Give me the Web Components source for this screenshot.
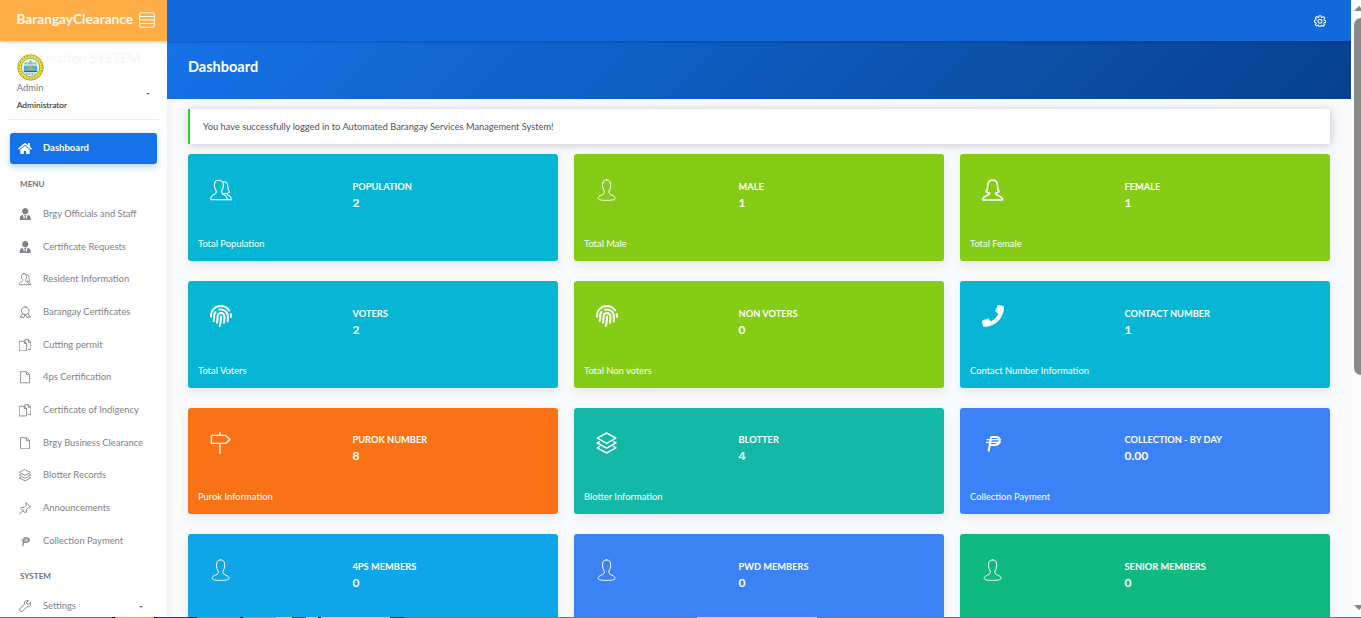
<!DOCTYPE html>
<html lang="en"><head><meta charset="utf-8"><title>Dashboard</title>
<style>
html,body{margin:0;height:618px;overflow:hidden}
body{font-family:Lato,"Open Sans",sans-serif;font-size:9.38px;color:#575962;background:#f9fbfd}
</style></head><body><brgy-app></brgy-app>
<script>
const define=(n,html,after)=>{const t=document.createElement('template');t.innerHTML=html;
 customElements.define(n,class extends HTMLElement{connectedCallback(){if(this.shadowRoot)return;this.attachShadow({mode:'open'}).append(t.content.cloneNode(true));after&&after(this,this.shadowRoot)}})};
const S=(d,w=1)=>`<path d="${d}" fill="none" stroke="currentColor" stroke-width="${w}" stroke-linejoin="round" stroke-linecap="round"/>`;
const F=d=>`<path d="${d}" fill="currentColor"/>`;
const person='M10.6 .8C7.6 .8 6.5 3 6.5 6c0 3 .9 4.6 1.7 6 .6 2-.4 3-2.4 4C3.1 17 2.2 17.8 2.2 19.6c0 1.2 3.5 1.8 8.4 1.8s8.4-.6 8.4-1.8c0-1.8-.9-2.6-3.6-3.6-2-1-3-2-2.4-4 .8-1.4 1.7-3 1.7-6C14.7 3 13.6 .8 10.6 .8z';
const group='M8.5 1.2C5.5 1.2 4.4 3.4 4.4 6.2c0 2.6.6 4 1.8 5.4.4 2.4-.2 3.2-2.2 4C1.4 16.8.7 17.6.7 20.6h16.6c0-2.6-.8-3.6-3.6-4.8-1.8-.8-2.4-1.6-2-4.2 1.2-1.4 1.7-2.8 1.7-5.4 0-2.8-1.3-5-4.9-5zM12.4 3c3.8-1 5.4 1.2 5.4 5 0 2.4.6 3.8 1.8 4.8-.6.8-1.6 1.2-2.6 1.4 0 1.4.4 1.8 1.8 2.4 1.8.8 2.4 1.6 2.4 4h-3.8M13.8 14.6h3';
const ICONS={
 home:['0 0 576 512',F('M280.37 148.26L96 300.11V464a16 16 0 0 0 16 16l112.06-.29a16 16 0 0 0 15.92-16V368a16 16 0 0 1 16-16h64a16 16 0 0 1 16 16v95.64a16 16 0 0 0 16 16.05L464 480a16 16 0 0 0 16-16V300L295.67 148.26a12.19 12.19 0 0 0-15.3 0zM571.6 251.47L488 182.56V44.05a12 12 0 0 0-12-12h-56a12 12 0 0 0-12 12v72.61L318.47 43a48 48 0 0 0-61 0L4.34 251.47a12 12 0 0 0-1.6 16.9l25.5 31A12 12 0 0 0 45.15 301l235.22-193.74a12.19 12.19 0 0 1 15.3 0L530.9 301a12 12 0 0 0 16.9-1.6l25.5-31a12 12 0 0 0-1.7-16.93z')],
 tie:['0 0 448 512',F('M224 256c70.7 0 128-57.3 128-128S294.7 0 224 0 96 57.3 96 128s57.3 128 128 128zm95.8 32.6L272 480l-32-136 32-56h-96l32 56-32 136-47.8-191.4C56.9 292 0 350.3 0 422.4V464c0 26.5 21.5 48 48 48h352c26.5 0 48-21.5 48-48v-41.6c0-72.1-56.9-130.4-128.2-133.8z')],
 phone:['0 0 512 512',F('M493.4 24.6l-104-24c-11.3-2.6-22.9 3.3-27.5 13.9l-48 112c-4.2 9.8-1.4 21.3 6.9 28l60.6 49.6c-36 76.7-98.9 140.5-177.2 177.2l-49.6-60.6c-6.8-8.3-18.2-11.1-28-6.9l-112 48C3.9 366.5-2 378.1.6 389.4l24 104C27.1 504.2 36.7 512 48 512c256.1 0 464-207.5 464-464 0-11.2-7.7-20.9-18.6-23.4z')],
 person:['0 0 22 22',S(person,1)],
 female:['0 0 22 22',S('M10.6 1C6.8 1 5.6 4 5.6 8c0 2-.6 3.6-1.4 4.6.8.8 2.2 1.2 3.4 1.4 0 1.4-.6 1.8-2.6 2.6C2.1 17.8.8 18.4.8 21h19.8c0-2.6-1.5-3.2-4.4-4.4-2-.8-2.6-1.2-2.6-2.6 1.2-.2 2.6-.6 3.4-1.4C16.2 11.6 15.6 10 15.6 8c0-4-1.2-7-5-7z',1.6)],
 group:['0 0 22 22',S(group,1.1)],
 groupSmall:['0 0 22 22',S(group,1.5)],
 finger:['0 0 512 512',F('M256.12 245.96c-13.25 0-24 10.74-24 24 1.14 72.25-8.14 141.9-27.7 211.55-2.73 9.72 2.15 30.49 23.12 30.49 10.48 0 20.11-6.92 23.09-17.52 13.53-47.91 31.04-125.41 29.48-224.52.01-13.25-10.73-24-23.99-24zm-.86-81.73C194 164.16 151.25 211.3 152.1 265.32c.75 47.94-3.75 95.91-13.37 142.55-2.69 12.98 5.67 25.69 18.64 28.36 13.05 2.67 25.67-5.66 28.36-18.64 10.34-50.09 15.17-101.58 14.37-153.02-.41-25.95 19.92-52.49 54.45-52.34 31.31.47 57.15 25.34 57.62 55.47.77 48.05-2.81 96.33-10.61 143.55-2.17 13.06 6.69 25.42 19.76 27.58 19.97 3.33 26.81-15.1 27.58-19.77 8.28-50.03 12.06-101.21 11.27-152.11-.88-55.8-47.94-101.88-104.91-102.72zm-110.69-19.78c-10.3-8.34-25.37-6.8-33.76 3.48-25.62 31.5-39.39 71.28-38.75 112 .59 37.58-2.47 75.27-9.11 112.05-2.34 13.05 6.31 25.53 19.36 27.89 20.11 3.5 27.07-14.81 27.89-19.36 7.19-39.84 10.5-80.66 9.86-121.33-.47-29.88 9.2-57.88 28-80.97 8.35-10.28 6.79-25.39-3.49-33.76zm109.47-62.33c-15.41-.41-30.87 1.44-45.78 4.97-12.89 3.06-20.87 15.98-17.83 28.89 3.06 12.89 16 20.83 28.89 17.83 11.05-2.61 22.47-3.77 34-3.69 75.43 1.13 137.73 61.5 138.88 134.58.59 37.88-1.28 76.11-5.58 113.63-1.5 13.17 7.95 25.08 21.11 26.58 16.72 1.95 25.51-11.88 26.58-21.11a929.06 929.06 0 0 0 5.89-119.85c-1.56-98.75-85.07-180.33-186.16-181.82zm252.07 121.45c-2.86-12.92-15.51-21.2-28.61-18.27-12.94 2.86-21.12 15.66-18.26 28.61 4.71 21.41 4.91 37.41 4.7 61.6-.11 13.27 10.55 24.09 23.8 24.2h.2c13.17 0 23.89-10.61 24-23.8.18-22.18.4-44.11-5.83-72.34zm-40.12-90.72C417.29 43.46 337.6 1.29 252.81.02 183.02-.82 118.47 24.91 70.46 72.94 24.09 119.37-.9 181.04.14 246.65l-.12 21.47c-.39 13.25 10.03 24.31 23.28 24.69.23.02.48.02.72.02 12.92 0 23.59-10.3 23.97-23.3l.16-23.64c-.83-52.5 19.16-101.86 56.28-139 38.76-38.8 91.34-59.67 147.68-58.86 69.45 1.03 134.73 35.56 174.62 92.39 7.61 10.86 22.56 13.45 33.42 5.86 10.84-7.62 13.46-22.59 5.84-33.43z')],
 sign:['0 0 22 22',S('M1.4 3.4h14.2l4.4 4-4.4 4H1.4zM10 .8v2.6M10 11.4V21.4',1.4)],
 layers:['0 0 22 22',S('M10.6 1l9.3 5.2-9.3 5.2-9.3-5.2zM1.3 11l9.3 5.2 9.3-5.2M1.3 15.8L10.6 21l9.3-5.2M1.3 11l2-1.2M19.9 11l-2-1.2M1.3 15.8l2-1.2M19.9 15.8l-2-1.2',1.5)],
 peso:['0 0 22 22',S('M6.7 18.6L9.2 5h5c5.4 0 4.2 8-1.6 8H8.2',2.1)+S('M5 7.6h13.6M4.6 10.4h13.6',1.3)],
 award:['0 0 22 22',S('M11 1.5a6.8 6.8 0 1 0 .01 0zM6.5 13.5L2 19.6l4-.2 1.6 2.2 3.4-6.4 3.4 6.4 1.6-2.2 4 .2-4.5-6.1',1.7)],
 file:['0 0 22 22',S('M3.4 1.2h10l5.2 5V20.8H3.4zM13 1.4v5h5.4',1.5)],
 files:['0 0 22 22',S('M1 4h8.6l3.8 4v13H1zM9.4 4.2V8h4M10.4 3.6V1.2h6.2L21 5.6v12.8h-4.4M16.4 1.4v4.4H21',1.6)],
 pin:['0 0 22 22',S('M13 1.5l7.5 7.5-2 1.2-1.8-.5-4 4 .3 4-1.7 1.8L3 11.2 4.8 9.5l4 .3 4-4-.6-2zM7.2 15.3L1.2 21',1.7)],
 wrench:['0 0 22 22',S('M20.5 4.6l-3.7 3.5-3-1-.6-2.8 3.5-3.2c-4-1.4-8 1.3-7.2 6.2L1.6 15.6c-1.8 2.8 1.2 6 4 4.4l8.6-8.1c4.5.8 7.6-2.8 6.3-7.3z',1.6)],
 gear:['0 0 22 22',S('M9.3 1.2h3.4l.6 2.9 1.7.7 2.5-1.7L20 5.6l-1.8 2.4.7 1.7 2.4.5v3.4l-2.8.6-.7 1.6 1.6 2.5-2.4 2.4-2.5-1.7-1.6.7-.6 2.1H9.5l-.7-2.6-1.6-.7-2.4 1.6L2.4 17.7 4 15.3l-.7-1.6-2.6-.5V9.8l2.7-.6.7-1.7-1.6-2.4 2.4-2.4L7.4 4.6l1.4-.6zM11 8a3.6 3.6 0 1 0 .01 0z',1.9)],
 list:['0 0 16 16',S('M2.4.7h11.2q1.7 0 1.7 1.7v11.2q0 1.7-1.7 1.7H2.4q-1.7 0-1.7-1.7V2.4Q.7.7 2.4.7zM1 4.5h14M1 8h14M1 11.5h14',1.1)],
 seal:['0 0 28 28','<circle cx="14" cy="14" r="13.2" fill="#f6e92a" stroke="#8e8630" stroke-width=".7"/><circle cx="14" cy="14" r="11.7" fill="none" stroke="#8b8a30" stroke-width="1.3" stroke-dasharray="1 2.2"/><circle cx="14" cy="14" r="9.6" fill="#f6faf6" stroke="#4a7d78" stroke-width=".7"/><path d="M7 12h14v6H7z" fill="#4fb0dc"/><path d="M7 11l2-3 2 1.5L14 6l3 3.5L19 8l2 3z" fill="#8cc5b4"/><path d="M11.5 16.5l.6-3.5L14 11.5l1.9 1.5.6 3.5z" fill="#d7a15c"/><path d="M7 18.3h14" stroke="#345" stroke-width="1"/><path d="M9 20.8h10" stroke="#365d67" stroke-width="1" stroke-dasharray="2 1"/>']
};
ICONS.null=['0 0 1 1',''];
define('brgy-icon','<style>:host{display:block;width:22px;height:22px;flex:none}svg{display:block;width:100%;height:100%}</style><svg></svg>',(h,r)=>{const [v,p]=ICONS[h.getAttribute('name')],s=r.querySelector('svg');s.setAttribute('viewBox',v);s.innerHTML=p});
define('brgy-caret','<style>:host{display:block;width:0;border:2px solid transparent;border-top-color:#777;border-bottom:0}</style>');
define('brgy-item',`<style>:host{display:grid;grid-template-columns:30px 1fr auto;align-items:center;height:32.7px;padding:0 24.5px 0 10px;color:#808188}
brgy-icon{width:12.5px;height:12.5px;justify-self:center}
:host([active]){height:31px;margin:0 10px 0 10px;padding:0;border-radius:3px;background:#1572e8;color:#fff;font-weight:700;font-size:9.5px;box-shadow:0 3px 7px rgba(21,114,232,.3)}
:host([active]) brgy-icon{width:14px;height:13px}span{padding:0 0 1.4px 3px;white-space:nowrap}brgy-caret{margin-top:2px}</style><brgy-icon></brgy-icon><span><slot></slot></span>`,(h,r)=>{const i=r.querySelector('brgy-icon'),n=document.createElement('brgy-icon');n.setAttribute('name',h.getAttribute('icon'));i.replaceWith(n);if(h.hasAttribute('caret'))r.append(document.createElement('brgy-caret'))});
define('brgy-section','<style>:host{display:block;padding-left:20px;font-size:8.1px;line-height:10px;font-weight:700;color:#6f7178}</style><slot></slot>');
define('brgy-card',`<style>:host{display:grid;grid-template-columns:154.5px 1fr;grid-template-rows:1fr auto;height:106.67px;box-sizing:border-box;padding:23.5px 10px 10px;border-radius:3px;color:#fff;background:var(--c);box-shadow:1px 4px 10px rgba(69,65,78,.1)}
brgy-icon{margin:.6px 0 0 12px}.t{font-size:9.27px;font-weight:700;line-height:16px;padding-top:1.2px}.n{font-size:12px}.f{grid-column:1/3;line-height:14px;font-size:9.4px}</style><brgy-icon></brgy-icon><div class="t"><slot></slot><div class="n"></div></div><div class="f"></div>`,(h,r)=>{const n=document.createElement('brgy-icon');n.setAttribute('name',h.getAttribute('icon'));r.querySelector('brgy-icon').replaceWith(n);r.querySelector('.n').textContent=h.getAttribute('n');r.querySelector('.f').textContent=h.getAttribute('foot')});
define('brgy-logo',`<style>:host{display:block;height:41px;box-sizing:border-box;background:#ffad46;box-shadow:0 1px 3px rgba(0,0,0,.25)}
.b{padding:0 12px 0 16.5px;height:39px;display:flex;justify-content:space-between;align-items:center;font-size:13.65px;font-weight:700;color:#fff8ed}.b span{padding-bottom:1.5px}.o{height:39px;line-height:39px;padding-left:16.5px;font-size:13.4px;font-weight:700;color:#f7f8f9;white-space:nowrap}brgy-icon{width:16px;height:16px;margin-top:1px}</style><div class="b"><span>BarangayClearance</span><brgy-icon name="list"></brgy-icon></div><div class="o">information SYSTEM</div>`);
define('brgy-profile',`<style>:host{display:grid;grid-template-columns:1fr auto;margin:0 8px;padding:13px 9.5px 0 8.8px;height:65px;border-bottom:1px solid #ededf0;align-content:start;line-height:14px}brgy-icon{width:27px;height:27px;grid-column:1/3}
.a{font-size:9.33px;color:#777}.r{font-size:8.4px;color:#333;line-height:18px;margin-top:1px;-webkit-text-stroke:.1px #333}brgy-caret{align-self:center;margin-top:-7px}</style><brgy-icon name="seal"></brgy-icon><div><div class="a">Admin</div><div class="r">Administrator</div></div><brgy-caret></brgy-caret>`);
define('brgy-sidebar',`<style>:host{display:block;background:#fff;overflow:hidden;height:617px}brgy-item[active]{margin-top:12.5px}.m{margin-top:15.5px}.l{margin-top:8.8px}.s{margin-top:13.2px;margin-bottom:9px}</style>
<brgy-logo></brgy-logo><brgy-profile></brgy-profile><brgy-item active icon="home">Dashboard</brgy-item><brgy-section class="m">MENU</brgy-section>
<div class="l"><brgy-item icon="tie">Brgy Officials and Staff</brgy-item><brgy-item icon="tie">Certificate Requests</brgy-item><brgy-item icon="groupSmall">Resident Information</brgy-item><brgy-item icon="award">Barangay Certificates</brgy-item><brgy-item icon="files">Cutting permit</brgy-item><brgy-item icon="file">4ps Certification</brgy-item><brgy-item icon="files">Certificate of Indigency</brgy-item><brgy-item icon="file">Brgy Business Clearance</brgy-item><brgy-item icon="layers">Blotter Records</brgy-item><brgy-item icon="pin">Announcements</brgy-item><brgy-item icon="peso">Collection Payment</brgy-item></div>
<brgy-section class="s">SYSTEM</brgy-section><brgy-item icon="wrench" caret>Settings</brgy-item>`);
define('brgy-topbar',`<style>:host{display:flex;height:41px;box-sizing:border-box;justify-content:flex-end;align-items:center;padding-right:25px;background:#1269db;color:#fff;box-shadow:0 1px 3px rgba(0,0,0,.25);position:relative}brgy-icon{width:12px;height:12px}</style><brgy-icon name="gear"></brgy-icon>`);
define('brgy-alert',`<style>:host{display:block;height:35px;line-height:35px;box-sizing:border-box;border-left:2px solid #31ce36;background:#fff;padding-left:13px;font-size:9.28px;color:#4f5056;box-shadow:1px 1px 9px rgba(69,65,90,.28)}</style><slot></slot>`);
define('brgy-scrollbar',`<style>:host{display:flex;flex-direction:column;align-items:flex-end;background:#fcfcfc;overflow:hidden;height:617px}.u,.d{width:0;border:5px solid transparent;margin-right:-3px}.u{border-top:0;border-bottom-color:#858585;margin-top:6px}.t{width:14px;margin:7px -7px 0 0;height:357px;border-radius:7px;background:#898989}.d{border-bottom:0;border-top-color:#858585;margin-top:auto;margin-bottom:7px}</style><div class="u"></div><div class="t"></div><div class="d"></div>`);
define('brgy-app',`<style>:host{display:grid;grid-template-columns:167px 1184px 10px;grid-template-rows:617px 1px;height:618px;overflow:hidden}
main{overflow:hidden;height:617px;background:linear-gradient(90deg,#f1f2f6,#f9fbfd 7px)}h1{margin:0;height:58px;line-height:52px;padding-left:21px;font-size:14.5px;font-weight:700;color:#fff;background:linear-gradient(-45deg,#06418e,#1572e8)}
brgy-alert{margin:10px 21px 10.45px 21px}.g{display:grid;grid-template-columns:repeat(3,370px);gap:20px 16px;padding-left:21px}
.strip{grid-column:1/4;background:linear-gradient(90deg,#667888 0 112px,#111 112px 115px,#d9ae73 115px 154px,#111 154px 157px,#3c3a72 157px 190px,#13252b 190px 197px,#6c9c9b 197px 240px,#111 240px 243px,#71aaa8 243px 276px,#9fe2c8 276px 292px,#155ba0 292px 306px,#9fe2c8 306px 318px,#111 318px 321px,#9fe2c8 321px 390px,#123c77 390px 404px,#527ba5 404px 697px,#b8cfee 697px 817px,#527ba5 817px)}</style>
<brgy-sidebar></brgy-sidebar><main><brgy-topbar></brgy-topbar><h1>Dashboard</h1><brgy-alert>You have successfully logged in to Automated Barangay Services Management System!</brgy-alert><div class="g">
<brgy-card style="--c:#06b6d4" icon="group" n="2" foot="Total Population">POPULATION</brgy-card>
<brgy-card style="--c:#84cc16" icon="person" n="1" foot="Total Male">MALE</brgy-card>
<brgy-card style="--c:#84cc16" icon="female" n="1" foot="Total Female">FEMALE</brgy-card>
<brgy-card style="--c:#06b6d4" icon="finger" n="2" foot="Total Voters">VOTERS</brgy-card>
<brgy-card style="--c:#84cc16" icon="finger" n="0" foot="Total Non voters">NON VOTERS</brgy-card>
<brgy-card style="--c:#06b6d4" icon="phone" n="1" foot="Contact Number Information">CONTACT NUMBER</brgy-card>
<brgy-card style="--c:#f97316" icon="sign" n="8" foot="Purok Information">PUROK NUMBER</brgy-card>
<brgy-card style="--c:#14b8a6" icon="layers" n="4" foot="Blotter Information">BLOTTER</brgy-card>
<brgy-card style="--c:#3b82f6" icon="peso" n="0.00" foot="Collection Payment">COLLECTION - BY DAY</brgy-card>
<brgy-card style="--c:#0ea5e9" icon="person" n="0" foot="">4PS MEMBERS</brgy-card>
<brgy-card style="--c:#3b82f6" icon="person" n="0" foot="">PWD MEMBERS</brgy-card>
<brgy-card style="--c:#10b981" icon="person" n="0" foot="">SENIOR MEMBERS</brgy-card>
</div></main><brgy-scrollbar></brgy-scrollbar><div class="strip"></div>`);
</script></body></html>
